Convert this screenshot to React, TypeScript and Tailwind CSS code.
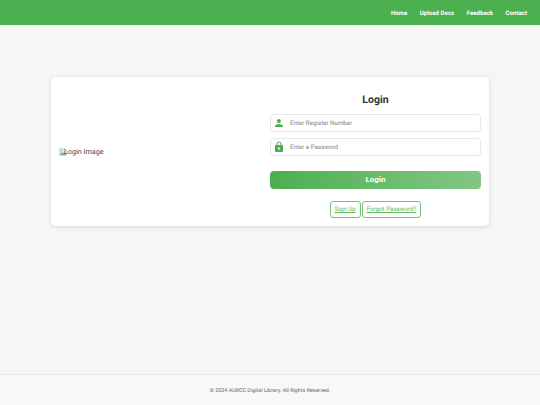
const navItems = ['Home', 'Upload Docx', 'Feedback', 'Contact']

function BrokenImage() {
  return (
    <svg viewBox="0 0 16 16" className="w-[8px] h-[8px] shrink-0">
      <path d="M1 1h10l4 4v10H1z" fill="#e8eef7" stroke="#b4bac2" strokeWidth="1" />
      <path d="M2 14l4-6 3 3 2-2 3 5z" fill="#6fb06f" />
      <circle cx="5" cy="5" r="2" fill="#8fbcec" />
    </svg>
  )
}

function PersonIcon() {
  return (
    <svg viewBox="0 0 24 24" className="w-[12px] h-[12px] shrink-0 fill-[#4caf50]">
      <path d="M12 12c2.21 0 4-1.79 4-4s-1.79-4-4-4-4 1.79-4 4 1.79 4 4 4zm0 2c-2.67 0-8 1.34-8 4v2h16v-2c0-2.66-5.33-4-8-4z" />
    </svg>
  )
}

function LockIcon() {
  return (
    <svg viewBox="0 0 24 24" className="w-[12px] h-[12px] shrink-0 fill-[#4caf50]">
      <path d="M18 8h-1V6c0-2.76-2.24-5-5-5S7 3.24 7 6v2H6c-1.1 0-2 .9-2 2v10c0 1.1.9 2 2 2h12c1.1 0 2-.9 2-2V10c0-1.1-.9-2-2-2zm-6 9c-1.1 0-2-.9-2-2s.9-2 2-2 2 .9 2 2-.9 2-2 2zm3.1-9H8.9V6c0-1.71 1.39-3.1 3.1-3.1 1.71 0 3.1 1.39 3.1 3.1v2z" />
    </svg>
  )
}

export default function App() {
  return (
    <div className="flex flex-col h-[405px] w-[540px] overflow-hidden bg-[#f6f6f6] font-['Roboto',sans-serif] antialiased [text-rendering:geometricPrecision]">
      <header className="flex items-center justify-end gap-[12.5px] h-[25px] pt-[2px] px-[13px] bg-[#4caf50]">
        {navItems.map((item) => (
          <a key={item} className="text-[6.1px] font-bold text-white">
            {item}
          </a>
        ))}
      </header>

      <main className="flex-1">
        <div className="flex items-center mt-[52px] mx-auto w-[438px] h-[149px] p-[8px] bg-white rounded-[5px] shadow-[0_1px_5px_rgba(0,0,0,0.12)]">
          <div className="flex items-center w-[211px] pt-[1px] text-[7.2px] text-[#444]">
            <BrokenImage />
            <span className="-ml-[3px]">Login Image</span>
          </div>

          <div className="flex flex-col flex-1">
            <h2 className="flex items-center justify-center h-[29px] text-[10.5px] font-bold text-[#333]">Login</h2>

            <div className="flex items-center gap-[5px] h-[18px] px-[2px] mb-[6px] border border-[#e8e8e8] rounded-[3px]">
              <PersonIcon />
              <span className="pt-[1px] text-[6.2px] text-[#858585]">Enter Register Number</span>
            </div>
            <div className="flex items-center gap-[5px] h-[18px] px-[2px] mb-[15px] border border-[#e8e8e8] rounded-[3px]">
              <LockIcon />
              <span className="pt-[1px] text-[6.2px] text-[#858585]">Enter a Password</span>
            </div>

            <button className="h-[18px] rounded-[4px] bg-gradient-to-r from-[#4caf50] to-[#81c784] text-[8px] font-bold text-white mb-[12px]">
              Login
            </button>

            <div className="flex justify-center gap-[1px]">
              <a className="flex items-center h-[17px] px-[4px] border border-[#74c077] rounded-[3px] text-[6.2px] text-[#5cb860] underline">
                Sign Up
              </a>
              <a className="flex items-center h-[17px] px-[4px] border border-[#74c077] rounded-[3px] text-[6.2px] text-[#5cb860] underline">
                Forgot Password?
              </a>
            </div>
          </div>
        </div>
      </main>

      <footer className="flex items-center justify-center h-[31px] pt-[2px] bg-[#f8f8f8] border-t border-[#e6e6e6] text-[5.4px] text-[#666]">
        © 2024 AURCC Digital Library. All Rights Reserved.
      </footer>
    </div>
  )
}
